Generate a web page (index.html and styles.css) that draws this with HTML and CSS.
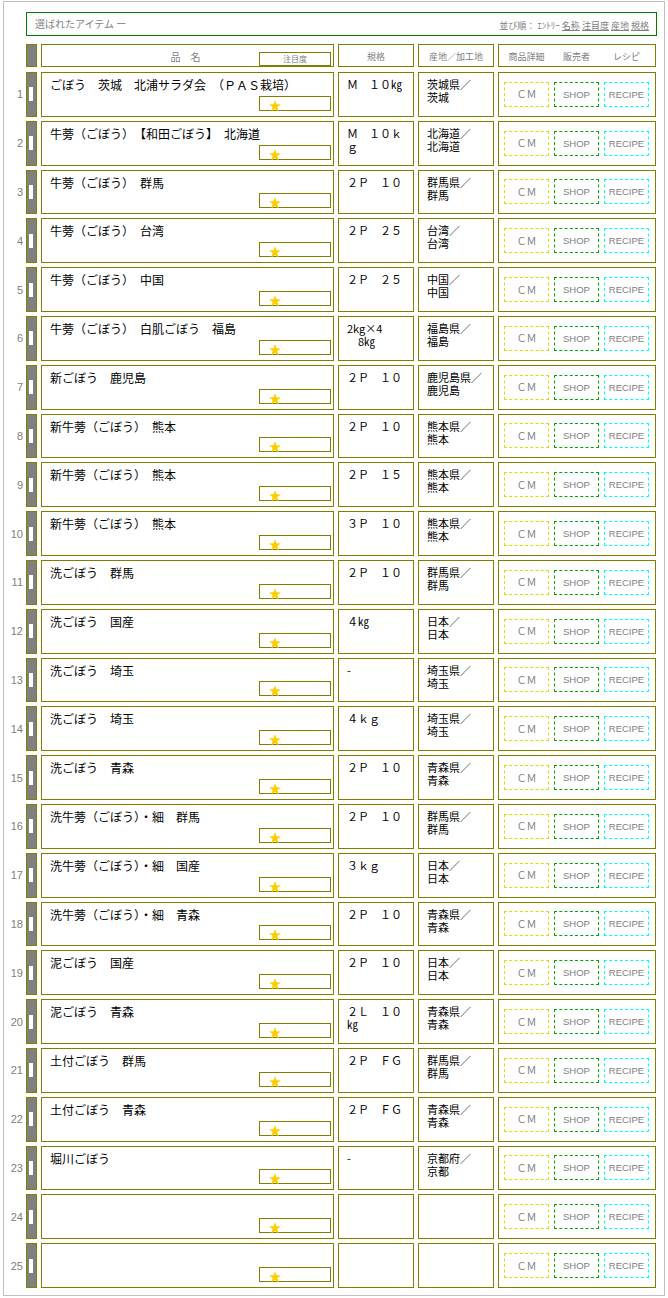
FILE: index.html
```html
<!DOCTYPE html>
<html lang="ja">
<head>
<meta charset="utf-8">
<title>選ばれたアイテム</title>
<link rel="stylesheet" href="styles.css">
</head>
<body>
<div class="frame">
  <div class="topbar">
    <span class="top-title">選ばれたアイテム ー</span>
    <span class="sort">並び順： ｴﾝﾄﾘｰ <a href="#">名称</a> <a href="#">注目度</a> <a href="#">産地</a> <a href="#">規格</a></span>
  </div>
  <div class="list">
    <div class="row head">
      <div class="num"></div>
      <div class="cell handle"></div>
      <div class="cell name-h"><span class="h-label">品　名</span><span class="attn">注目度</span></div>
      <div class="cell spec-h">規格</div>
      <div class="cell origin-h">産地／加工地</div>
      <div class="cell links-h"><span>商品詳細</span><span>販売者</span><span>レシピ</span></div>
    </div>

    <div class="row"><div class="num">1</div><div class="cell handle"><i></i></div><div class="cell name"><p>ごぼう　茨城　北浦サラダ会　（ＰＡＳ栽培）</p><div class="stars"><svg viewBox="0 0 12 12"><polygon points="6,0 7.4,4.3 12,4.4 8.3,7.1 9.7,11.6 6,8.9 2.3,11.6 3.7,7.1 0,4.4 4.6,4.3"/></svg></div></div><div class="cell spec">Ｍ　１０㎏</div><div class="cell origin">茨城県／<br>茨城</div><div class="cell links"><a class="btn cm">ＣＭ</a><a class="btn shop">SHOP</a><a class="btn recipe">RECIPE</a></div></div>

    <div class="row"><div class="num">2</div><div class="cell handle"><i></i></div><div class="cell name"><p>牛蒡（ごぼう）　【和田ごぼう】　北海道</p><div class="stars"><svg viewBox="0 0 12 12"><polygon points="6,0 7.4,4.3 12,4.4 8.3,7.1 9.7,11.6 6,8.9 2.3,11.6 3.7,7.1 0,4.4 4.6,4.3"/></svg></div></div><div class="cell spec">Ｍ　１０ｋｇ</div><div class="cell origin">北海道／<br>北海道</div><div class="cell links"><a class="btn cm">ＣＭ</a><a class="btn shop">SHOP</a><a class="btn recipe">RECIPE</a></div></div>

    <div class="row"><div class="num">3</div><div class="cell handle"><i></i></div><div class="cell name"><p>牛蒡（ごぼう）　群馬</p><div class="stars"><svg viewBox="0 0 12 12"><polygon points="6,0 7.4,4.3 12,4.4 8.3,7.1 9.7,11.6 6,8.9 2.3,11.6 3.7,7.1 0,4.4 4.6,4.3"/></svg></div></div><div class="cell spec">２Ｐ　１０</div><div class="cell origin">群馬県／<br>群馬</div><div class="cell links"><a class="btn cm">ＣＭ</a><a class="btn shop">SHOP</a><a class="btn recipe">RECIPE</a></div></div>

    <div class="row"><div class="num">4</div><div class="cell handle"><i></i></div><div class="cell name"><p>牛蒡（ごぼう）　台湾</p><div class="stars"><svg viewBox="0 0 12 12"><polygon points="6,0 7.4,4.3 12,4.4 8.3,7.1 9.7,11.6 6,8.9 2.3,11.6 3.7,7.1 0,4.4 4.6,4.3"/></svg></div></div><div class="cell spec">２Ｐ　２５</div><div class="cell origin">台湾／<br>台湾</div><div class="cell links"><a class="btn cm">ＣＭ</a><a class="btn shop">SHOP</a><a class="btn recipe">RECIPE</a></div></div>

    <div class="row"><div class="num">5</div><div class="cell handle"><i></i></div><div class="cell name"><p>牛蒡（ごぼう）　中国</p><div class="stars"><svg viewBox="0 0 12 12"><polygon points="6,0 7.4,4.3 12,4.4 8.3,7.1 9.7,11.6 6,8.9 2.3,11.6 3.7,7.1 0,4.4 4.6,4.3"/></svg></div></div><div class="cell spec">２Ｐ　２５</div><div class="cell origin">中国／<br>中国</div><div class="cell links"><a class="btn cm">ＣＭ</a><a class="btn shop">SHOP</a><a class="btn recipe">RECIPE</a></div></div>

    <div class="row"><div class="num">6</div><div class="cell handle"><i></i></div><div class="cell name"><p>牛蒡（ごぼう）　白肌ごぼう　福島</p><div class="stars"><svg viewBox="0 0 12 12"><polygon points="6,0 7.4,4.3 12,4.4 8.3,7.1 9.7,11.6 6,8.9 2.3,11.6 3.7,7.1 0,4.4 4.6,4.3"/></svg></div></div><div class="cell spec">2kg×4<br>　8㎏</div><div class="cell origin">福島県／<br>福島</div><div class="cell links"><a class="btn cm">ＣＭ</a><a class="btn shop">SHOP</a><a class="btn recipe">RECIPE</a></div></div>

    <div class="row"><div class="num">7</div><div class="cell handle"><i></i></div><div class="cell name"><p>新ごぼう　鹿児島</p><div class="stars"><svg viewBox="0 0 12 12"><polygon points="6,0 7.4,4.3 12,4.4 8.3,7.1 9.7,11.6 6,8.9 2.3,11.6 3.7,7.1 0,4.4 4.6,4.3"/></svg></div></div><div class="cell spec">２Ｐ　１０</div><div class="cell origin">鹿児島県／<br>鹿児島</div><div class="cell links"><a class="btn cm">ＣＭ</a><a class="btn shop">SHOP</a><a class="btn recipe">RECIPE</a></div></div>

    <div class="row"><div class="num">8</div><div class="cell handle"><i></i></div><div class="cell name"><p>新牛蒡（ごぼう）　熊本</p><div class="stars"><svg viewBox="0 0 12 12"><polygon points="6,0 7.4,4.3 12,4.4 8.3,7.1 9.7,11.6 6,8.9 2.3,11.6 3.7,7.1 0,4.4 4.6,4.3"/></svg></div></div><div class="cell spec">２Ｐ　１０</div><div class="cell origin">熊本県／<br>熊本</div><div class="cell links"><a class="btn cm">ＣＭ</a><a class="btn shop">SHOP</a><a class="btn recipe">RECIPE</a></div></div>

    <div class="row"><div class="num">9</div><div class="cell handle"><i></i></div><div class="cell name"><p>新牛蒡（ごぼう）　熊本</p><div class="stars"><svg viewBox="0 0 12 12"><polygon points="6,0 7.4,4.3 12,4.4 8.3,7.1 9.7,11.6 6,8.9 2.3,11.6 3.7,7.1 0,4.4 4.6,4.3"/></svg></div></div><div class="cell spec">２Ｐ　１５</div><div class="cell origin">熊本県／<br>熊本</div><div class="cell links"><a class="btn cm">ＣＭ</a><a class="btn shop">SHOP</a><a class="btn recipe">RECIPE</a></div></div>

    <div class="row"><div class="num">10</div><div class="cell handle"><i></i></div><div class="cell name"><p>新牛蒡（ごぼう）　熊本</p><div class="stars"><svg viewBox="0 0 12 12"><polygon points="6,0 7.4,4.3 12,4.4 8.3,7.1 9.7,11.6 6,8.9 2.3,11.6 3.7,7.1 0,4.4 4.6,4.3"/></svg></div></div><div class="cell spec">３Ｐ　１０</div><div class="cell origin">熊本県／<br>熊本</div><div class="cell links"><a class="btn cm">ＣＭ</a><a class="btn shop">SHOP</a><a class="btn recipe">RECIPE</a></div></div>

    <div class="row"><div class="num">11</div><div class="cell handle"><i></i></div><div class="cell name"><p>洗ごぼう　群馬</p><div class="stars"><svg viewBox="0 0 12 12"><polygon points="6,0 7.4,4.3 12,4.4 8.3,7.1 9.7,11.6 6,8.9 2.3,11.6 3.7,7.1 0,4.4 4.6,4.3"/></svg></div></div><div class="cell spec">２Ｐ　１０</div><div class="cell origin">群馬県／<br>群馬</div><div class="cell links"><a class="btn cm">ＣＭ</a><a class="btn shop">SHOP</a><a class="btn recipe">RECIPE</a></div></div>

    <div class="row"><div class="num">12</div><div class="cell handle"><i></i></div><div class="cell name"><p>洗ごぼう　国産</p><div class="stars"><svg viewBox="0 0 12 12"><polygon points="6,0 7.4,4.3 12,4.4 8.3,7.1 9.7,11.6 6,8.9 2.3,11.6 3.7,7.1 0,4.4 4.6,4.3"/></svg></div></div><div class="cell spec">４㎏</div><div class="cell origin">日本／<br>日本</div><div class="cell links"><a class="btn cm">ＣＭ</a><a class="btn shop">SHOP</a><a class="btn recipe">RECIPE</a></div></div>

    <div class="row"><div class="num">13</div><div class="cell handle"><i></i></div><div class="cell name"><p>洗ごぼう　埼玉</p><div class="stars"><svg viewBox="0 0 12 12"><polygon points="6,0 7.4,4.3 12,4.4 8.3,7.1 9.7,11.6 6,8.9 2.3,11.6 3.7,7.1 0,4.4 4.6,4.3"/></svg></div></div><div class="cell spec">-</div><div class="cell origin">埼玉県／<br>埼玉</div><div class="cell links"><a class="btn cm">ＣＭ</a><a class="btn shop">SHOP</a><a class="btn recipe">RECIPE</a></div></div>

    <div class="row"><div class="num">14</div><div class="cell handle"><i></i></div><div class="cell name"><p>洗ごぼう　埼玉</p><div class="stars"><svg viewBox="0 0 12 12"><polygon points="6,0 7.4,4.3 12,4.4 8.3,7.1 9.7,11.6 6,8.9 2.3,11.6 3.7,7.1 0,4.4 4.6,4.3"/></svg></div></div><div class="cell spec">４ｋｇ</div><div class="cell origin">埼玉県／<br>埼玉</div><div class="cell links"><a class="btn cm">ＣＭ</a><a class="btn shop">SHOP</a><a class="btn recipe">RECIPE</a></div></div>

    <div class="row"><div class="num">15</div><div class="cell handle"><i></i></div><div class="cell name"><p>洗ごぼう　青森</p><div class="stars"><svg viewBox="0 0 12 12"><polygon points="6,0 7.4,4.3 12,4.4 8.3,7.1 9.7,11.6 6,8.9 2.3,11.6 3.7,7.1 0,4.4 4.6,4.3"/></svg></div></div><div class="cell spec">２Ｐ　１０</div><div class="cell origin">青森県／<br>青森</div><div class="cell links"><a class="btn cm">ＣＭ</a><a class="btn shop">SHOP</a><a class="btn recipe">RECIPE</a></div></div>

    <div class="row"><div class="num">16</div><div class="cell handle"><i></i></div><div class="cell name"><p>洗牛蒡（ごぼう）・細　群馬</p><div class="stars"><svg viewBox="0 0 12 12"><polygon points="6,0 7.4,4.3 12,4.4 8.3,7.1 9.7,11.6 6,8.9 2.3,11.6 3.7,7.1 0,4.4 4.6,4.3"/></svg></div></div><div class="cell spec">２Ｐ　１０</div><div class="cell origin">群馬県／<br>群馬</div><div class="cell links"><a class="btn cm">ＣＭ</a><a class="btn shop">SHOP</a><a class="btn recipe">RECIPE</a></div></div>

    <div class="row"><div class="num">17</div><div class="cell handle"><i></i></div><div class="cell name"><p>洗牛蒡（ごぼう）・細　国産</p><div class="stars"><svg viewBox="0 0 12 12"><polygon points="6,0 7.4,4.3 12,4.4 8.3,7.1 9.7,11.6 6,8.9 2.3,11.6 3.7,7.1 0,4.4 4.6,4.3"/></svg></div></div><div class="cell spec">３ｋｇ</div><div class="cell origin">日本／<br>日本</div><div class="cell links"><a class="btn cm">ＣＭ</a><a class="btn shop">SHOP</a><a class="btn recipe">RECIPE</a></div></div>

    <div class="row"><div class="num">18</div><div class="cell handle"><i></i></div><div class="cell name"><p>洗牛蒡（ごぼう）・細　青森</p><div class="stars"><svg viewBox="0 0 12 12"><polygon points="6,0 7.4,4.3 12,4.4 8.3,7.1 9.7,11.6 6,8.9 2.3,11.6 3.7,7.1 0,4.4 4.6,4.3"/></svg></div></div><div class="cell spec">２Ｐ　１０</div><div class="cell origin">青森県／<br>青森</div><div class="cell links"><a class="btn cm">ＣＭ</a><a class="btn shop">SHOP</a><a class="btn recipe">RECIPE</a></div></div>

    <div class="row"><div class="num">19</div><div class="cell handle"><i></i></div><div class="cell name"><p>泥ごぼう　国産</p><div class="stars"><svg viewBox="0 0 12 12"><polygon points="6,0 7.4,4.3 12,4.4 8.3,7.1 9.7,11.6 6,8.9 2.3,11.6 3.7,7.1 0,4.4 4.6,4.3"/></svg></div></div><div class="cell spec">２Ｐ　１０</div><div class="cell origin">日本／<br>日本</div><div class="cell links"><a class="btn cm">ＣＭ</a><a class="btn shop">SHOP</a><a class="btn recipe">RECIPE</a></div></div>

    <div class="row"><div class="num">20</div><div class="cell handle"><i></i></div><div class="cell name"><p>泥ごぼう　青森</p><div class="stars"><svg viewBox="0 0 12 12"><polygon points="6,0 7.4,4.3 12,4.4 8.3,7.1 9.7,11.6 6,8.9 2.3,11.6 3.7,7.1 0,4.4 4.6,4.3"/></svg></div></div><div class="cell spec">２Ｌ　１０㎏</div><div class="cell origin">青森県／<br>青森</div><div class="cell links"><a class="btn cm">ＣＭ</a><a class="btn shop">SHOP</a><a class="btn recipe">RECIPE</a></div></div>

    <div class="row"><div class="num">21</div><div class="cell handle"><i></i></div><div class="cell name"><p>土付ごぼう　群馬</p><div class="stars"><svg viewBox="0 0 12 12"><polygon points="6,0 7.4,4.3 12,4.4 8.3,7.1 9.7,11.6 6,8.9 2.3,11.6 3.7,7.1 0,4.4 4.6,4.3"/></svg></div></div><div class="cell spec">２Ｐ　ＦＧ</div><div class="cell origin">群馬県／<br>群馬</div><div class="cell links"><a class="btn cm">ＣＭ</a><a class="btn shop">SHOP</a><a class="btn recipe">RECIPE</a></div></div>

    <div class="row"><div class="num">22</div><div class="cell handle"><i></i></div><div class="cell name"><p>土付ごぼう　青森</p><div class="stars"><svg viewBox="0 0 12 12"><polygon points="6,0 7.4,4.3 12,4.4 8.3,7.1 9.7,11.6 6,8.9 2.3,11.6 3.7,7.1 0,4.4 4.6,4.3"/></svg></div></div><div class="cell spec">２Ｐ　ＦＧ</div><div class="cell origin">青森県／<br>青森</div><div class="cell links"><a class="btn cm">ＣＭ</a><a class="btn shop">SHOP</a><a class="btn recipe">RECIPE</a></div></div>

    <div class="row"><div class="num">23</div><div class="cell handle"><i></i></div><div class="cell name"><p>堀川ごぼう</p><div class="stars"><svg viewBox="0 0 12 12"><polygon points="6,0 7.4,4.3 12,4.4 8.3,7.1 9.7,11.6 6,8.9 2.3,11.6 3.7,7.1 0,4.4 4.6,4.3"/></svg></div></div><div class="cell spec">-</div><div class="cell origin">京都府／<br>京都</div><div class="cell links"><a class="btn cm">ＣＭ</a><a class="btn shop">SHOP</a><a class="btn recipe">RECIPE</a></div></div>

    <div class="row"><div class="num">24</div><div class="cell handle"><i></i></div><div class="cell name"><p></p><div class="stars"><svg viewBox="0 0 12 12"><polygon points="6,0 7.4,4.3 12,4.4 8.3,7.1 9.7,11.6 6,8.9 2.3,11.6 3.7,7.1 0,4.4 4.6,4.3"/></svg></div></div><div class="cell spec"></div><div class="cell origin"></div><div class="cell links"><a class="btn cm">ＣＭ</a><a class="btn shop">SHOP</a><a class="btn recipe">RECIPE</a></div></div>

    <div class="row"><div class="num">25</div><div class="cell handle"><i></i></div><div class="cell name"><p></p><div class="stars"><svg viewBox="0 0 12 12"><polygon points="6,0 7.4,4.3 12,4.4 8.3,7.1 9.7,11.6 6,8.9 2.3,11.6 3.7,7.1 0,4.4 4.6,4.3"/></svg></div></div><div class="cell spec"></div><div class="cell origin"></div><div class="cell links"><a class="btn cm">ＣＭ</a><a class="btn shop">SHOP</a><a class="btn recipe">RECIPE</a></div></div>
  </div>
</div>
</body>
</html>
```
FILE: styles.css
```css
* { box-sizing: border-box; }

body {
  margin: 0;
  background: #ffffff;
  font-family: "Noto Sans CJK JP", "Noto Sans", sans-serif;
  color: #000000;
}

.frame {
  margin: 1px 0 0 3px;
  width: 662px;
  height: 1295px;
  border: 1px solid #c0c0c0;
  padding: 10px 7px 0 0;
}

.topbar {
  margin-left: 22px;
  height: 24px;
  border: 1px solid #008000;
  display: flex;
  align-items: center;
  justify-content: space-between;
  padding: 0 7px 0 8px;
  color: #808080;
}

.top-title {
  font-size: 10px;
  line-height: 12px;
}

.sort {
  font-size: 9px;
  line-height: 11px;
  padding-top: 2px;
}

.sort a {
  color: #808080;
  text-decoration: underline;
}

.list {
  margin-top: 8px;
  display: flex;
  flex-direction: column;
  gap: 4px;
}

.row {
  display: flex;
  height: 44.8px;
}

.row > .cell + .cell {
  margin-left: 4px;
}

.row.head {
  height: 23px;
  margin-bottom: 1px;
}

.num {
  width: 22px;
  flex: none;
  align-self: center;
  text-align: right;
  padding-right: 3px;
  font-family: "Liberation Sans", Arial, sans-serif;
  font-size: 11px;
  line-height: 12px;
  color: #808080;
}

.cell {
  flex: none;
  border: 1px solid #808000;
}

.handle {
  width: 11px;
  background: #808080;
  display: flex;
  align-items: center;
  justify-content: center;
}

.handle i {
  display: block;
  width: 4px;
  height: 14px;
  background: #ffffff;
  margin-right: 1px;
}

.name {
  width: 293px;
  display: flex;
  flex-direction: column;
  padding: 5px 0 0 8px;
}

.name p {
  margin: 0;
  font-size: 12px;
  line-height: 14px;
  white-space: nowrap;
}

.stars {
  margin-top: auto;
  margin-right: 2px;
  margin-bottom: 5px;
  align-self: flex-end;
  width: 72px;
  height: 15px;
  flex: none;
  border: 1px solid #808000;
  padding-left: 9px;
  display: flex;
  align-items: flex-start;
  overflow: visible;
}

.stars svg {
  width: 12px;
  height: 12px;
  margin-top: 3px;
  fill: #ffcc00;
  flex: none;
}

.spec,
.origin {
  width: 76px;
  padding: 5px 4px 0 8px;
  font-size: 11px;
  line-height: 13px;
}

.links {
  width: 158px;
  display: flex;
  align-items: center;
  gap: 5px;
  padding-left: 5px;
}

.btn {
  width: 45px;
  height: 25px;
  display: flex;
  align-items: center;
  justify-content: center;
  color: #808080;
  font-family: "Liberation Sans", Arial, sans-serif;
  font-size: 9.5px;
  text-decoration: none;
  border: 1px dashed;
}

.btn.cm {
  border-color: #dddd00;
  font-family: "Noto Sans CJK JP", sans-serif;
  font-size: 10px;
  padding-bottom: 1px;
}

.btn.shop { border-color: #00aa00; }
.btn.recipe { border-color: #00ffff; }

/* header row */
.head .cell {
  color: #808080;
}

.name-h {
  width: 293px;
  display: grid;
}

.name-h > * {
  grid-area: 1 / 1;
}

.h-label {
  justify-self: center;
  align-self: center;
  font-size: 10px;
  line-height: 12px;
  margin-top: 2px;
  margin-left: -4px;
}

.attn {
  justify-self: end;
  align-self: end;
  width: 72px;
  height: 14px;
  margin: 0 2px 0 0;
  border: 1px solid #808000;
  font-size: 8px;
  line-height: 12px;
  text-align: center;
}

.spec-h,
.origin-h {
  width: 76px;
  display: flex;
  align-items: center;
  justify-content: center;
  font-size: 9px;
  line-height: 11px;
  padding-top: 2px;
  white-space: nowrap;
}

.links-h {
  width: 158px;
  display: flex;
  align-items: center;
  gap: 5px;
  padding-left: 5px;
  padding-top: 2px;
  font-size: 9px;
  line-height: 11px;
}

.links-h span {
  width: 45px;
  text-align: center;
  white-space: nowrap;
}
```
